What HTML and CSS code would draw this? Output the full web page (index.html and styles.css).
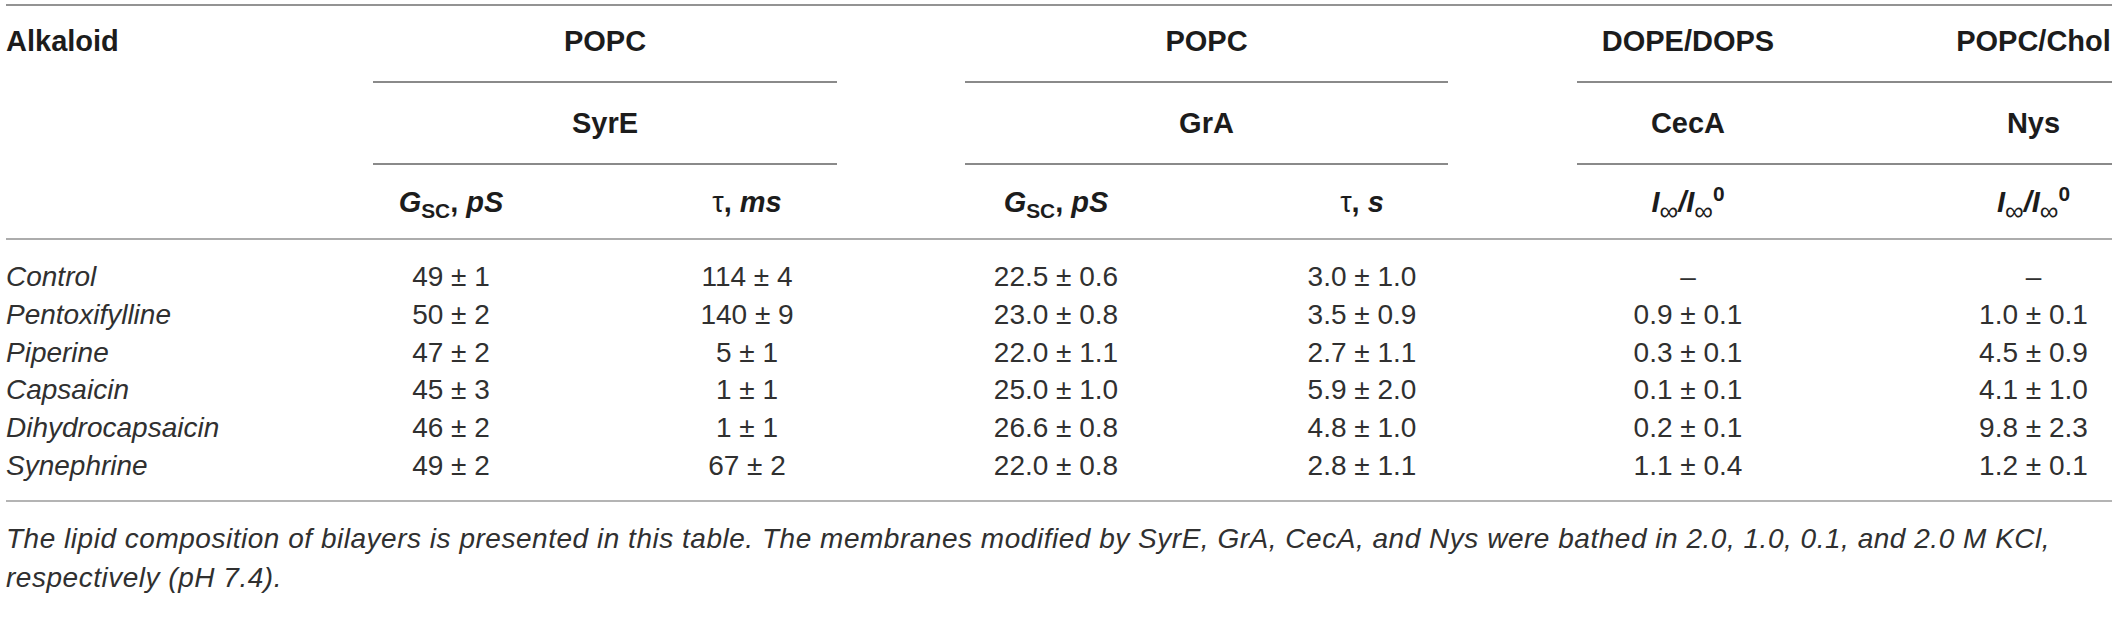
FILE: index.html
```html
<!DOCTYPE html>
<html lang="en">
<head>
<meta charset="utf-8">
<title>Alkaloid effects table</title>
<link rel="stylesheet" href="styles.css">
</head>
<body>
<div class="page">
  <div class="thead">
    <div class="th alk">Alkaloid</div>
    <div class="th span2 gapa rule">POPC</div>
    <div class="th span2 gapb rule">POPC</div>
    <div class="th rule">DOPE/DOPS</div>
    <div class="th c7 rule">POPC/Chol</div>

    <div class="th r2 span2 gapa rule">SyrE</div>
    <div class="th r2 span2 gapb rule">GrA</div>
    <div class="th r2 rule">CecA</div>
    <div class="th r2 c7 rule">Nys</div>

    <div class="th r3 rule2"><i>G</i><sub>SC</sub>, <i>pS</i></div>
    <div class="th r3 rule2"><span class="tau">τ</span>, <i>ms</i></div>
    <div class="th r3 rule2"><i>G</i><sub>SC</sub>, <i>pS</i></div>
    <div class="th r3 rule2"><span class="tau">τ</span>, <i>s</i></div>
    <div class="th r3 rule2"><i>I</i><sub class="inf">∞</sub><i>/I</i><sub class="inf">∞</sub><sup>0</sup></div>
    <div class="th r3 c7 rule2"><i>I</i><sub class="inf">∞</sub><i>/I</i><sub class="inf">∞</sub><sup>0</sup></div>
  </div>

  <div class="tbody">
    <div class="name">Control</div><div class="td">49 ± 1</div><div class="td">114 ± 4</div><div class="td">22.5 ± 0.6</div><div class="td">3.0 ± 1.0</div><div class="td">–</div><div class="td c7">–</div>
    <div class="name">Pentoxifylline</div><div class="td">50 ± 2</div><div class="td">140 ± 9</div><div class="td">23.0 ± 0.8</div><div class="td">3.5 ± 0.9</div><div class="td">0.9 ± 0.1</div><div class="td c7">1.0 ± 0.1</div>
    <div class="name">Piperine</div><div class="td">47 ± 2</div><div class="td">5 ± 1</div><div class="td">22.0 ± 1.1</div><div class="td">2.7 ± 1.1</div><div class="td">0.3 ± 0.1</div><div class="td c7">4.5 ± 0.9</div>
    <div class="name">Capsaicin</div><div class="td">45 ± 3</div><div class="td">1 ± 1</div><div class="td">25.0 ± 1.0</div><div class="td">5.9 ± 2.0</div><div class="td">0.1 ± 0.1</div><div class="td c7">4.1 ± 1.0</div>
    <div class="name">Dihydrocapsaicin</div><div class="td">46 ± 2</div><div class="td">1 ± 1</div><div class="td">26.6 ± 0.8</div><div class="td">4.8 ± 1.0</div><div class="td">0.2 ± 0.1</div><div class="td c7">9.8 ± 2.3</div>
    <div class="name">Synephrine</div><div class="td">49 ± 2</div><div class="td">67 ± 2</div><div class="td">22.0 ± 0.8</div><div class="td">2.8 ± 1.1</div><div class="td">1.1 ± 0.4</div><div class="td c7">1.2 ± 0.1</div>
  </div>

  <p class="caption">The lipid composition of bilayers is presented in this table. The membranes modified by SyrE, GrA, CecA, and Nys were bathed in 2.0, 1.0, 0.1, and 2.0 M KCl,<br>respectively (pH 7.4).</p>
</div>
</body>
</html>
```

FILE: styles.css
```css
html, body {
  margin: 0;
  padding: 0;
  background: #ffffff;
}

.page {
  padding: 4px 6px 0 6px;
  font-family: "Liberation Sans", Arial, sans-serif;
  color: #222222;
}

.thead,
.tbody {
  display: grid;
  grid-template-columns: 367px 156px 436px 182px 430px 222px 313px;
}

.thead {
  border-top: 2px solid #939393;
}

.th {
  font-size: 29px;
  font-weight: bold;
  line-height: 34px;
  color: #1c1c1c;
  text-align: center;
  padding: 18px 0 23px;
  white-space: nowrap;
}

.th.r2 {
  padding: 23px 0 23px;
}

.th.r3 {
  padding: 20px 0 19px;
}

.th.alk {
  grid-row: 1 / span 3;
  text-align: left;
  padding-left: 0;
  border-bottom: 2px solid #acacac;
}

.span2 {
  grid-column: span 2;
}

.gapa {
  margin-right: 128px;
}

.gapb {
  margin-right: 129px;
}

.rule {
  border-bottom: 2px solid #8a8a8a;
}

.rule2 {
  border-bottom: 2px solid #acacac;
}

.c7,
.th.c7 {
  padding-left: 156px;
}

.th i {
  font-style: italic;
}

.th sub {
  font-size: 0.72em;
  vertical-align: -0.3em;
  line-height: 0;
}

.th sub.inf {
  font-weight: normal;
  font-size: 0.9em;
  vertical-align: -0.32em;
}

.th sup {
  font-size: 0.72em;
  vertical-align: 0.55em;
  line-height: 0;
}

.tau {
  font-weight: normal;
}

.tbody {
  padding: 18px 0 15px;
  border-bottom: 2px solid #b4b4b4;
  font-size: 28px;
  line-height: 37.8px;
  color: #303030;
}

.name {
  font-style: italic;
  white-space: nowrap;
}

.td {
  text-align: center;
  white-space: nowrap;
}

.caption {
  margin: 17px 0 0;
  font-size: 28px;
  letter-spacing: 0.52px;
  line-height: 39px;
  font-style: italic;
  color: #303030;
  white-space: nowrap;
}
```
